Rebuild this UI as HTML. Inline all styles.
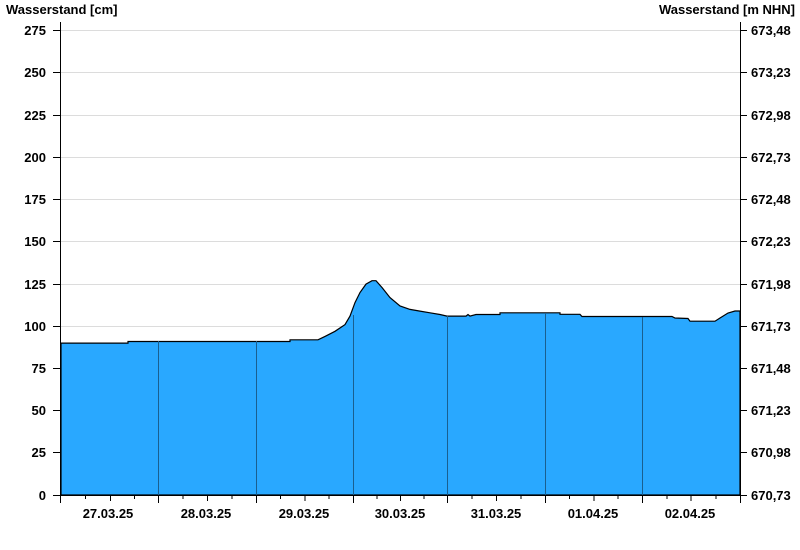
<!DOCTYPE html>
<html><head><meta charset="utf-8"><style>
html,body{margin:0;padding:0;background:#fff;}
svg{display:block;font-family:"Liberation Sans",Arial,sans-serif;font-weight:bold;font-size:13px;}
</style></head><body>
<svg width="800" height="550" viewBox="0 0 800 550" xmlns="http://www.w3.org/2000/svg">
<text x="6" y="14" fill="#000">Wasserstand [cm]</text>
<text x="795" y="14" text-anchor="end" fill="#000">Wasserstand [m NHN]</text>
<g stroke="#dcdcdc" stroke-width="1">
<line x1="61" x2="740" y1="30.5" y2="30.5"/><line x1="61" x2="740" y1="72.5" y2="72.5"/>
<line x1="61" x2="740" y1="115.5" y2="115.5"/><line x1="61" x2="740" y1="157.5" y2="157.5"/>
<line x1="61" x2="740" y1="199.5" y2="199.5"/><line x1="61" x2="740" y1="241.5" y2="241.5"/>
<line x1="61" x2="740" y1="284.5" y2="284.5"/><line x1="61" x2="740" y1="326.5" y2="326.5"/>
<line x1="61" x2="740" y1="368.5" y2="368.5"/><line x1="61" x2="740" y1="410.5" y2="410.5"/>
<line x1="61" x2="740" y1="452.5" y2="452.5"/>
</g>
<path d="M61,343.1 L128,343.1 L128,341.5 L290,341.5 L290,339.8 L318,339.8 L325,336.4 L335,331.3 L345,324.6 L350,316.1 L355,302.6 L360,292.5 L366,284.1 L372,280.7 L376,280.7 L382,287.5 L390,297.6 L400,306 L410,309.4 L420,311.1 L430,312.8 L440,314.5 L447,316.1 L466,316.1 L468,314.5 L470,316.1 L476,314.5 L500,314.5 L500,312.8 L560,312.8 L560,314.3 L580,314.3 L582,316.5 L640,316.5 L672,316.5 L675,318 L688,318.5 L690,321.2 L715,321.2 L720,318 L728,313 L735,311 L740,311 L740,495 L61,495 Z" fill="#29a8ff" stroke="#000" stroke-width="1.2"/>
<g stroke="#1a5f8f" stroke-width="1">
<line x1="158.5" x2="158.5" y1="341" y2="495"/><line x1="256.5" x2="256.5" y1="341" y2="495"/>
<line x1="353.5" x2="353.5" y1="315" y2="495"/><line x1="447.5" x2="447.5" y1="316" y2="495"/>
<line x1="545.5" x2="545.5" y1="313" y2="495"/><line x1="642.5" x2="642.5" y1="317" y2="495"/>
</g>
<g stroke="#000" stroke-width="1">
<line x1="60.5" x2="60.5" y1="22" y2="503"/>
<line x1="740.5" x2="740.5" y1="22" y2="495"/>
<line x1="53" x2="740" y1="495.5" y2="495.5"/>
<line x1="53" x2="61" y1="30.5" y2="30.5"/><line x1="53" x2="61" y1="72.5" y2="72.5"/>
<line x1="53" x2="61" y1="115.5" y2="115.5"/><line x1="53" x2="61" y1="157.5" y2="157.5"/>
<line x1="53" x2="61" y1="199.5" y2="199.5"/><line x1="53" x2="61" y1="241.5" y2="241.5"/>
<line x1="53" x2="61" y1="284.5" y2="284.5"/><line x1="53" x2="61" y1="326.5" y2="326.5"/>
<line x1="53" x2="61" y1="368.5" y2="368.5"/><line x1="53" x2="61" y1="410.5" y2="410.5"/>
<line x1="53" x2="61" y1="452.5" y2="452.5"/>
<line x1="740" x2="747" y1="30.5" y2="30.5"/><line x1="740" x2="747" y1="72.5" y2="72.5"/>
<line x1="740" x2="747" y1="115.5" y2="115.5"/><line x1="740" x2="747" y1="157.5" y2="157.5"/>
<line x1="740" x2="747" y1="199.5" y2="199.5"/><line x1="740" x2="747" y1="241.5" y2="241.5"/>
<line x1="740" x2="747" y1="284.5" y2="284.5"/><line x1="740" x2="747" y1="326.5" y2="326.5"/>
<line x1="740" x2="747" y1="368.5" y2="368.5"/><line x1="740" x2="747" y1="410.5" y2="410.5"/>
<line x1="740" x2="747" y1="452.5" y2="452.5"/><line x1="740" x2="747" y1="495.5" y2="495.5"/>
<line x1="158.5" x2="158.5" y1="495" y2="503"/><line x1="256.5" x2="256.5" y1="495" y2="503"/>
<line x1="353.5" x2="353.5" y1="495" y2="503"/><line x1="447.5" x2="447.5" y1="495" y2="503"/>
<line x1="545.5" x2="545.5" y1="495" y2="503"/><line x1="642.5" x2="642.5" y1="495" y2="503"/>
<line x1="740.5" x2="740.5" y1="495" y2="503"/>
<line x1="85.5" x2="85.5" y1="495" y2="499"/><line x1="110.5" x2="110.5" y1="495" y2="501"/><line x1="134.5" x2="134.5" y1="495" y2="499"/>
<line x1="183" x2="183" y1="495" y2="499"/><line x1="207.5" x2="207.5" y1="495" y2="501"/><line x1="232" x2="232" y1="495" y2="499"/>
<line x1="280.5" x2="280.5" y1="495" y2="499"/><line x1="305" x2="305" y1="495" y2="501"/><line x1="329" x2="329" y1="495" y2="499"/>
<line x1="377" x2="377" y1="495" y2="499"/><line x1="400.5" x2="400.5" y1="495" y2="501"/><line x1="424" x2="424" y1="495" y2="499"/>
<line x1="472" x2="472" y1="495" y2="499"/><line x1="496.5" x2="496.5" y1="495" y2="501"/><line x1="521" x2="521" y1="495" y2="499"/>
<line x1="569.5" x2="569.5" y1="495" y2="499"/><line x1="594" x2="594" y1="495" y2="501"/><line x1="618" x2="618" y1="495" y2="499"/>
<line x1="667" x2="667" y1="495" y2="499"/><line x1="691" x2="691" y1="495" y2="501"/><line x1="716" x2="716" y1="495" y2="499"/>
</g>
<g text-anchor="end" fill="#000">
<text x="46" y="35">275</text><text x="46" y="77">250</text><text x="46" y="120">225</text>
<text x="46" y="162">200</text><text x="46" y="204">175</text><text x="46" y="246">150</text>
<text x="46" y="289">125</text><text x="46" y="331">100</text><text x="46" y="373">75</text>
<text x="46" y="415">50</text><text x="46" y="457">25</text><text x="46" y="500">0</text>
</g>
<g fill="#000">
<text x="751" y="35">673,48</text><text x="751" y="77">673,23</text><text x="751" y="120">672,98</text>
<text x="751" y="162">672,73</text><text x="751" y="204">672,48</text><text x="751" y="246">672,23</text>
<text x="751" y="289">671,98</text><text x="751" y="331">671,73</text><text x="751" y="373">671,48</text>
<text x="751" y="415">671,23</text><text x="751" y="457">670,98</text><text x="751" y="500">670,73</text>
</g>
<g text-anchor="middle" fill="#000">
<text x="108" y="518">27.03.25</text><text x="206" y="518">28.03.25</text><text x="304" y="518">29.03.25</text>
<text x="400" y="518">30.03.25</text><text x="496" y="518">31.03.25</text><text x="593" y="518">01.04.25</text>
<text x="690" y="518">02.04.25</text>
</g>
</svg>
</body></html>
